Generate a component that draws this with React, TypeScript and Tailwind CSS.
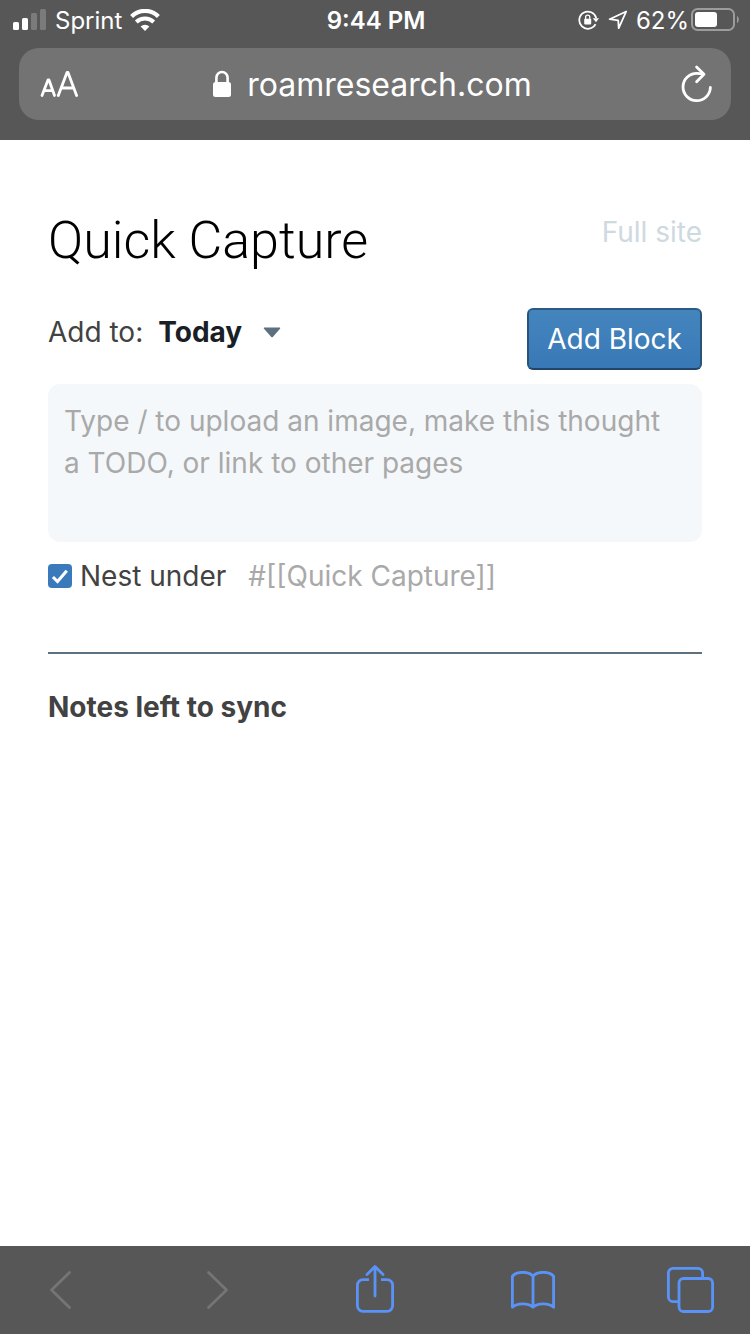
import { useState } from "react";

function SignalIcon() {
  return (
    <svg width="34" height="22" viewBox="0 0 34 22" aria-hidden="true">
      <rect x="0" y="13" width="6" height="8" rx="1.5" fill="#fff" />
      <rect x="9" y="9" width="6" height="12" rx="1.5" fill="#fff" />
      <rect x="18" y="4" width="6" height="17" rx="1.5" fill="#7b7b7b" />
      <rect x="27" y="0" width="6" height="21" rx="1.5" fill="#7b7b7b" />
    </svg>
  );
}

function WifiIcon() {
  return (
    <svg width="30" height="22" viewBox="0 0 30 22" fill="none" stroke="#fff" aria-hidden="true">
      <path d="M1.600 7.400a19 19 0 0 1 26.800 0" strokeWidth="4.200" />
      <path d="M6.300 13a12.600 12.600 0 0 1 17.400 0" strokeWidth="4" />
      <path d="M15 22l-4.400-4.600a6.400 6.400 0 0 1 8.800 0z" fill="#fff" stroke="none" />
    </svg>
  );
}

function RotationLockIcon() {
  return (
    <svg width="22" height="20" viewBox="0 0 22 20" fill="none" stroke="#fff" aria-hidden="true">
      <path d="M17.500 14.200A8.600 8.600 0 1 1 18.200 8" strokeWidth="1.800" />
      <path d="M14.800 8.200h6.200l-3 4z" fill="#fff" stroke="none" />
      <rect x="6.200" y="8.800" width="7" height="5.600" rx="0.800" fill="#fff" stroke="none" />
      <path d="M7.600 9V7.200a2.100 2.100 0 0 1 4.200 0V9" strokeWidth="1.300" />
    </svg>
  );
}

function LocationIcon() {
  return (
    <svg width="20" height="20" viewBox="0 0 20 20" fill="none" stroke="#fff" strokeWidth="1.800" strokeLinejoin="round" aria-hidden="true">
      <path d="M18.200 1.500L1.600 9.200l8.600 1.200.5 7.700z" />
    </svg>
  );
}

function BatteryIcon() {
  return (
    <svg width="48" height="24" viewBox="0 0 48 24" fill="none" aria-hidden="true">
      <rect x="1" y="1" width="42" height="21" rx="5.500" stroke="#9c9c9c" strokeWidth="2" />
      <rect x="4" y="4" width="22" height="15" rx="3" fill="#fff" />
      <path d="M46 8c2.400 1 2.400 6 0 7z" fill="#9c9c9c" />
    </svg>
  );
}

function TextSizeIcon() {
  return (
    <svg width="38" height="28" viewBox="0 0 38 28" fill="none" stroke="#fff" strokeWidth="2.800" strokeLinecap="round" strokeLinejoin="round" aria-hidden="true">
      <path d="M2 25.500L8 10h1l5.500 15.500M4.300 20.600h8.200" />
      <path d="M18.300 25.500L27 2.500h1l8.600 23M21.200 18h12.600" />
    </svg>
  );
}

function LockIcon() {
  return (
    <svg width="18" height="28" viewBox="0 0 18 28" fill="none" aria-hidden="true">
      <rect x="0" y="12" width="18" height="15" rx="2.500" fill="#fff" />
      <path d="M3.400 13V7.600a5.600 5.600 0 0 1 11.200 0V13" stroke="#fff" strokeWidth="2.600" />
    </svg>
  );
}

function ReloadIcon() {
  return (
    <svg width="32" height="38" viewBox="0 0 32 38" fill="none" stroke="#fff" strokeWidth="2.800" strokeLinecap="round" strokeLinejoin="round" aria-hidden="true">
      <path d="M29.400 22.500A13.700 13.700 0 1 1 15.700 8.300c2.200 0 4.200.2 6.600.7" />
      <path d="M15.600 2l7.400 7.200-7.400 7.600" />
    </svg>
  );
}

function BackIcon() {
  return (
    <svg width="24" height="40" viewBox="0 0 24 40" fill="none" stroke="#757575" strokeWidth="2.800" strokeLinecap="round" strokeLinejoin="round" aria-hidden="true">
      <path d="M21.500 2.500L3.500 20l18 17.500" />
    </svg>
  );
}

function ForwardIcon() {
  return (
    <svg width="24" height="40" viewBox="0 0 24 40" fill="none" stroke="#757575" strokeWidth="2.800" strokeLinecap="round" strokeLinejoin="round" aria-hidden="true">
      <path d="M2.500 2.500l18 17.500-18 17.500" />
    </svg>
  );
}

function ShareIcon() {
  return (
    <svg width="38" height="50" viewBox="0 0 38 50" fill="none" stroke="#5a93f8" strokeWidth="2.800" strokeLinejoin="round" aria-hidden="true">
      <path d="M13 14.600H7a5.600 5.600 0 0 0-5.600 5.600v20.600a5.600 5.600 0 0 0 5.600 5.600h24a5.600 5.600 0 0 0 5.600-5.600V20.200a5.600 5.600 0 0 0-5.600-5.600h-6" />
      <path d="M19 31V1.800M11 9.400l8-7.800 8 7.800" strokeLinecap="round" />
    </svg>
  );
}

function BookIcon() {
  return (
    <svg width="44" height="38" viewBox="0 0 44 38" fill="none" stroke="#5a93f8" strokeWidth="2.800" strokeLinecap="round" strokeLinejoin="round" aria-hidden="true">
      <path d="M22 5.200C17.500 0 6 0 1.400 5.200v31C6 31.800 17.500 31.800 22 36.200c4.500-4.400 16-4.400 20.600 0v-31C38 0 26.500 0 22 5.200v31" />
    </svg>
  );
}

function TabsIcon() {
  return (
    <svg width="48" height="46" viewBox="0 0 48 46" fill="none" stroke="#5a93f8" strokeWidth="2.800" strokeLinejoin="round" aria-hidden="true">
      <path d="M36.600 11V6a4.600 4.600 0 0 0-4.600-4.600H7A4.600 4.600 0 0 0 2.400 6v24a4.600 4.600 0 0 0 4.600 4.600h5.500" />
      <rect x="13" y="11.500" width="33.600" height="33" rx="4.600" />
    </svg>
  );
}

function StatusBar() {
  return (
    <div className="grid h-10 grid-cols-[1fr_auto_1fr] items-center pr-[11px] pl-[13px] text-2xl text-white">
      <div className="flex items-center gap-2">
        <SignalIcon />
        <span className="pt-0.5">Sprint</span>
        <WifiIcon />
      </div>
      <div className="pt-0.5 font-semibold">9:44 PM</div>
      <div className="flex items-center justify-end gap-0.5">
        <div className="flex items-center gap-2">
          <RotationLockIcon />
          <LocationIcon />
          <span className="pt-0.5">62%</span>
        </div>
        <BatteryIcon />
      </div>
    </div>
  );
}

function AddressBar() {
  return (
    <div className="mx-[19px] mt-2 flex h-[72px] items-center justify-between rounded-[20px] bg-[#737373] pr-[18px] pl-[21px] text-white">
      <button type="button" aria-label="Text size">
        <TextSizeIcon />
      </button>
      <a href="https://roamresearch.com" className="flex items-center gap-4 pr-3.5 text-[32px] leading-10">
        <LockIcon />
        <span className="pt-0.5">roamresearch.com</span>
      </a>
      <button type="button" aria-label="Reload">
        <ReloadIcon />
      </button>
    </div>
  );
}

function Toolbar() {
  const items = [
    { label: "Back", icon: <BackIcon />, disabled: true },
    { label: "Forward", icon: <ForwardIcon />, disabled: true },
    { label: "Share", icon: <ShareIcon />, disabled: false },
    { label: "Bookmarks", icon: <BookIcon />, disabled: false },
    { label: "Tabs", icon: <TabsIcon />, disabled: false },
  ];
  return (
    <nav className="flex h-[88px] items-center justify-between bg-[#575757] px-[30px]">
      {items.map((item) => (
        <button
          key={item.label}
          type="button"
          aria-label={item.label}
          disabled={item.disabled}
          className="flex h-full w-[60px] items-center justify-center"
        >
          {item.icon}
        </button>
      ))}
    </nav>
  );
}

function QuickCapture() {
  const [text, setText] = useState("");
  const [nested, setNested] = useState(true);
  return (
    <main className="flex-1 px-12 pt-[71px] text-[28px] leading-[42px] text-[#424242]">
      <div className="flex items-start justify-between">
        <h1 className="font-[Roboto,sans-serif] text-[52px] leading-[60px] font-light text-black">Quick Capture</h1>
        <a href="#full" className="text-[#ced9e0]">
          Full site
        </a>
      </div>

      <div className="mt-[37px] flex items-start justify-between">
        <div className="flex items-center gap-[15px] pt-[3px]">
          <label htmlFor="target">Add to:</label>
          <div className="flex items-center gap-[21px]">
            <select id="target" className="appearance-none bg-transparent font-bold text-[#182026]">
              <option>Today</option>
            </select>
            <svg width="18" height="11" viewBox="0 0 18 11" aria-hidden="true">
              <path d="M1.500 0.500h15c.8 0 1 .7.500 1.200l-7.200 8.300c-.5.500-1 .5-1.500 0L1 1.700C.5 1.200.7.500 1.500.500z" fill="#5c7080" />
            </svg>
          </div>
        </div>
        <button
          type="button"
          className="h-[62px] rounded-md border-2 border-t-[#2b5a85] border-r-[#28547c] border-b-[#214468] border-l-[#28547c] bg-linear-to-b from-[#4585be] to-[#3878b6] px-[18px] text-white"
        >
          Add Block
        </button>
      </div>

      <textarea
        aria-label="Note"
        value={text}
        onChange={(e) => setText(e.target.value)}
        placeholder="Type / to upload an image, make this thought a TODO, or link to other pages"
        className="mt-3.5 block h-[158px] w-full resize-none rounded-xl bg-[#f5f8fa] py-4 pr-6 pl-4 outline-none placeholder:text-[#a9a9a9]"
      />

      <div className="mt-[13px] flex items-center">
        <label className="flex items-center gap-2">
          <span className="grid size-6">
            <input
              type="checkbox"
              checked={nested}
              onChange={(e) => setNested(e.target.checked)}
              className="peer col-start-1 row-start-1 size-6 appearance-none rounded bg-[#3a7aba]"
            />
            <svg
              className="pointer-events-none col-start-1 row-start-1 opacity-0 peer-checked:opacity-100"
              width="24"
              height="24"
              viewBox="0 0 24 24"
              fill="none"
              stroke="#fff"
              strokeWidth="3"
              strokeLinecap="square"
              aria-hidden="true"
            >
              <path d="M6 14l3.500 3.500L17.800 7.800" />
            </svg>
          </span>
          <span>Nest under</span>
        </label>
        <input
          aria-label="Parent block"
          placeholder="#[[Quick Capture]]"
          className="ml-[22px] min-w-0 flex-1 bg-transparent outline-none placeholder:text-[#a9a9a9]"
        />
      </div>

      <hr className="mt-[55px] border-t-2 border-[#5c7080]" />
      <h2 className="mt-8 font-bold">Notes left to sync</h2>
    </main>
  );
}

export default function App() {
  return (
    <div className="flex min-h-screen flex-col bg-white font-[Inter,sans-serif]">
      <header className="bg-[#575757] pb-5">
        <StatusBar />
        <AddressBar />
      </header>
      <QuickCapture />
      <Toolbar />
    </div>
  );
}
